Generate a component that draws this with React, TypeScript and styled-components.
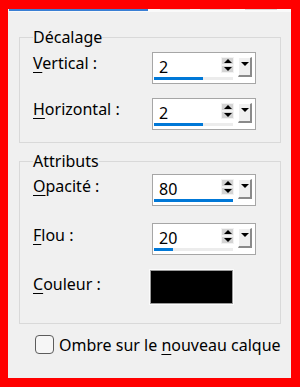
import React from "react";
import styled, { createGlobalStyle } from "styled-components";

const GlobalStyle = createGlobalStyle`
  html, body {
    margin: 0;
    padding: 0;
    background: #ff0000;
  }
  body {
    font-family: "Noto Sans", "Open Sans", sans-serif;
    font-size: 16px;
    color: #000;
  }
`;

const Frame = styled.div`
  width: 300px;
  height: 387px;
  box-sizing: border-box;
  padding: 9px 9px 9px 8px;
  background: #ff0000;
`;

const Panel = styled.div`
  width: 283px;
  height: 369px;
  background: #f0f0f0;
  display: flex;
  flex-direction: column;
  padding-left: 11px;
  box-sizing: border-box;
`;

const TabStrip = styled.div`
  height: 3px;
  margin-left: -11px;
  background: #fafafa;
  display: flex;
  align-items: flex-start;
`;

const TabEdge = styled.div<{ $active?: boolean; $width: number; $left: number }>`
  height: ${({ $active }) => ($active ? "2px" : "1px")};
  width: ${({ $width }) => $width}px;
  margin-left: ${({ $left }) => $left}px;
  background: ${({ $active }) => ($active ? "#3a7fd4" : "#d6d6d6")};
`;

const Group = styled.fieldset<{ $mt: number; $pt: number; $pb: number }>`
  width: 262px;
  box-sizing: border-box;
  margin: ${({ $mt }) => $mt}px 0 0 0;
  padding: ${({ $pt }) => $pt}px 10px ${({ $pb }) => $pb}px 13px;
  border: 1px solid #d9d9d9;
  min-inline-size: 0;
`;

const Legend = styled.legend`
  padding: 0;
  line-height: 20px;
  font-size: 16px;
`;

const Row = styled.div<{ $mt?: number }>`
  display: flex;
  align-items: flex-start;
  margin-top: ${({ $mt }) => $mt ?? 0}px;
`;

const Label = styled.div<{ $pt?: number }>`
  width: 119px;
  flex: none;
  line-height: 20px;
  padding-top: ${({ $pt }) => $pt ?? 2}px;
  white-space: nowrap;
`;

const Key = styled.span`
  text-decoration: underline;
  text-underline-offset: 3px;
  text-decoration-thickness: 1px;
`;

const SpinBox = styled.div`
  width: 104px;
  height: 32px;
  box-sizing: border-box;
  border: 1px solid #a6a6a6;
  background: #ffffff;
  display: flex;
  flex-direction: column;
`;

const SpinTop = styled.div`
  height: 24px;
  box-sizing: border-box;
  padding: 4px 3px 0 6px;
  display: flex;
  align-items: flex-start;
`;

const Value = styled.div`
  flex: 1;
  line-height: 20px;
`;

const Arrows = styled.div`
  width: 13px;
  display: flex;
  flex-direction: column;
  margin-right: 4px;
`;

const ArrowBtn = styled.div<{ $down?: boolean }>`
  height: 8px;
  box-sizing: border-box;
  background: #d4d4d4;
  border: 1px solid #f2f2f2;
  display: flex;
  align-items: center;
  justify-content: center;
  &::after {
    content: "";
    width: 0;
    height: 0;
    border-left: 4px solid transparent;
    border-right: 4px solid transparent;
    ${({ $down }) =>
      $down ? "border-top: 4px solid #000;" : "border-bottom: 4px solid #000;"}
  }
`;

const DropBtn = styled.div`
  width: 14px;
  height: 20px;
  box-sizing: border-box;
  background: #f0f0f0;
  border-top: 1px solid #ffffff;
  border-left: 1px solid #ffffff;
  border-right: 2px solid #8a8a8a;
  border-bottom: 2px solid #8a8a8a;
  display: flex;
  justify-content: center;
  padding-top: 4px;
  &::after {
    content: "";
    width: 0;
    height: 0;
    border-left: 4px solid transparent;
    border-right: 4px solid transparent;
    border-top: 4px solid #000;
  }
`;

const Track = styled.div`
  height: 3px;
  margin-left: 1px;
  width: 79px;
  background: #ececec;
`;

const Fill = styled.div`
  height: 3px;
  background: #0078d7;
`;

const Swatch = styled.div`
  width: 83px;
  height: 34px;
  margin-left: -2px;
  box-sizing: border-box;
  background: #000;
  border: 1px solid #9a9a9a;
  outline: 1px solid #fbfbfb;
`;

const CheckRow = styled.label`
  display: flex;
  align-items: flex-start;
  margin: 11px 0 0 16px;
  line-height: 20px;
`;

const CheckBox = styled.span`
  width: 19px;
  height: 19px;
  box-sizing: border-box;
  border: 1px solid #5c5c5c;
  border-radius: 4px;
  background: #f6f6f6;
  margin-right: 5px;
  flex: none;
`;

interface SpinFieldProps {
  value: string;
  fill: number;
}

const SpinField: React.FC<SpinFieldProps> = ({ value, fill }) => (
  <SpinBox>
    <SpinTop>
      <Value>{value}</Value>
      <Arrows>
        <ArrowBtn />
        <ArrowBtn $down />
      </Arrows>
      <DropBtn />
    </SpinTop>
    <Track>
      <Fill style={{ width: fill }} />
    </Track>
  </SpinBox>
);

export default function App() {
  return (
    <>
      <GlobalStyle />
      <Frame>
        <Panel>
          <TabStrip>
            <TabEdge $active $width={139} $left={1} />
            <TabEdge $width={30} $left={12} />
            <TabEdge $width={30} $left={10} />
            <TabEdge $width={32} $left={15} />
          </TabStrip>

          <Group $mt={15} $pt={5} $pb={12}>
            <Legend>Décalage</Legend>
            <Row>
              <Label $pt={1}>
                <Key>V</Key>ertical :
              </Label>
              <SpinField value="2" fill={49} />
            </Row>
            <Row $mt={14}>
              <Label $pt={1}>
                <Key>H</Key>orizontal :
              </Label>
              <SpinField value="2" fill={49} />
            </Row>
          </Group>

          <Group $mt={8} $pt={3} $pb={19}>
            <Legend>Attributs</Legend>
            <Row>
              <Label>
                <Key>O</Key>pacité :
              </Label>
              <SpinField value="80" fill={79} />
            </Row>
            <Row $mt={17}>
              <Label>
                <Key>F</Key>lou :
              </Label>
              <SpinField value="20" fill={19} />
            </Row>
            <Row $mt={15}>
              <Label $pt={4}>
                <Key>C</Key>ouleur :
              </Label>
              <Swatch />
            </Row>
          </Group>

          <CheckRow>
            <CheckBox />
            <span>
              Ombre sur le <Key>n</Key>ouveau calque
            </span>
          </CheckRow>
        </Panel>
      </Frame>
    </>
  );
}
